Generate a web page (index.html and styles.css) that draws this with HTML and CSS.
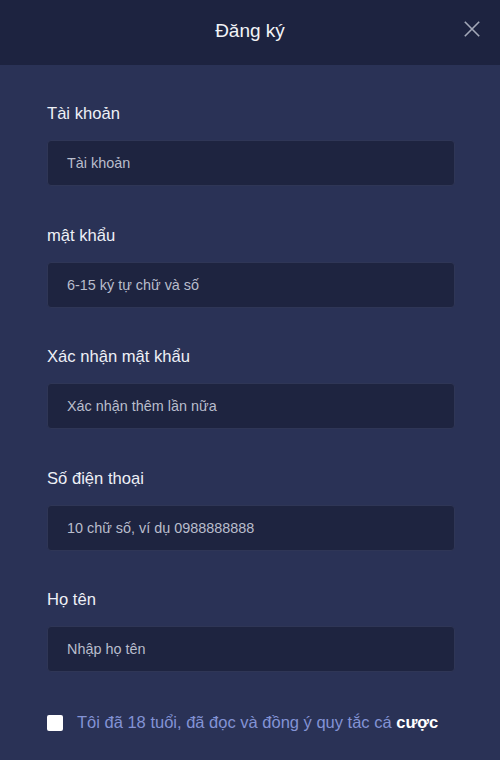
FILE: index.html
```html
<!DOCTYPE html>
<html lang="vi">
<head>
<meta charset="utf-8">
<title>Đăng ký</title>
<link rel="stylesheet" href="styles.css">
</head>
<body>
<div class="dialog">
  <header class="dialog-head">
    <h1 class="dialog-title">Đăng ký</h1>
    <button class="close-btn" type="button" aria-label="Đóng">
      <svg width="20" height="20" viewBox="0 0 20 20"><path d="M2 2 L18 18 M18 2 L2 18" stroke="currentColor" stroke-width="1.8" fill="none"/></svg>
    </button>
  </header>
  <form class="dialog-body">
    <div class="field">
      <label class="field-label">Tài khoản</label>
      <div class="field-input">Tài khoản</div>
    </div>
    <div class="field">
      <label class="field-label">mật khẩu</label>
      <div class="field-input">6-15 ký tự chữ và số</div>
    </div>
    <div class="field">
      <label class="field-label">Xác nhận mật khẩu</label>
      <div class="field-input">Xác nhận thêm lần nữa</div>
    </div>
    <div class="field">
      <label class="field-label">Số điện thoại</label>
      <div class="field-input">10 chữ số, ví dụ 0988888888</div>
    </div>
    <div class="field">
      <label class="field-label">Họ tên</label>
      <div class="field-input">Nhập họ tên</div>
    </div>
    <div class="agree">
      <span class="checkbox"></span>
      <span class="agree-text">Tôi đã 18 tuổi, đã đọc và đồng ý quy tắc cá <b>cược</b></span>
    </div>
  </form>
</div>
</body>
</html>
```

FILE: styles.css
```css
* { box-sizing: border-box; }

html, body {
  margin: 0;
  height: 100%;
  background: #2a3256;
  font-family: "Liberation Sans", Arial, sans-serif;
}

.dialog {
  width: 500px;
  min-height: 760px;
  background: #2a3256;
}

.dialog-head {
  height: 65px;
  background: #1d2340;
  display: flex;
  align-items: center;
  justify-content: center;
  position: relative;
}

.dialog-title {
  margin: 0;
  font-size: 19px;
  font-weight: normal;
  color: #f2f3f7;
  padding-bottom: 4px;
}

.close-btn {
  position: absolute;
  right: 19px;
  top: 20px;
  width: 18px;
  height: 18px;
  padding: 0;
  border: 0;
  background: none;
  color: #a3a8b8;
  display: flex;
}

.close-btn svg {
  width: 18px;
  height: 18px;
}

.dialog-body {
  padding: 39px 45px 0 47px;
  display: flex;
  flex-direction: column;
}

.field {
  display: flex;
  flex-direction: column;
  gap: 16px;
  margin-bottom: 39.5px;
}

.field-label {
  font-size: 16.6px;
  line-height: 20px;
  color: #eef0f6;
}

.field-input {
  height: 46px;
  background: #1e2440;
  border: 1px solid #2f3656;
  border-radius: 4px;
  display: flex;
  align-items: center;
  padding-left: 19px;
  font-size: 14.4px;
  color: #b9bdcc;
}

.agree {
  display: flex;
  align-items: center;
  gap: 14px;
  margin-top: 1px;
  height: 20px;
}

.checkbox {
  width: 16px;
  height: 16px;
  background: #fff;
  border-radius: 2px;
  flex: none;
}

.agree-text {
  font-size: 16.5px;
  color: #8393d5;
}

.agree-text b {
  color: #ffffff;
}
```
